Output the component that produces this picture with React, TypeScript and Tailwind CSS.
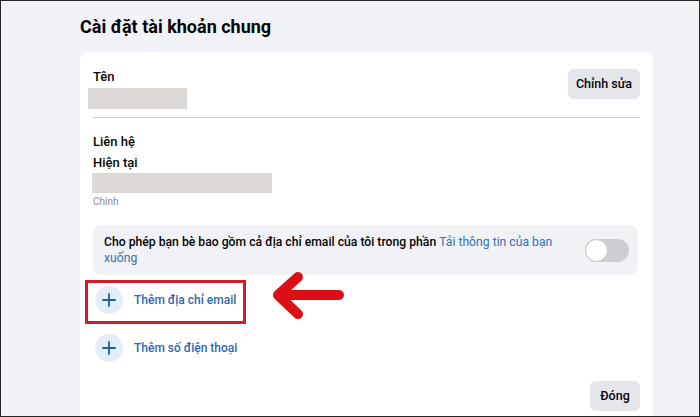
export default function App() {
  return (
    <div className="relative w-[700px] h-[417px] overflow-hidden border border-[#262626] bg-[#f0f2f5] font-['Roboto',sans-serif] text-[#050505]">
      <div className="pl-[79px] pt-[12px]">
        <h1 className="text-[18px] font-bold leading-[28px]">Cài đặt tài khoản chung</h1>

        <div className="mt-[11px] h-[400px] w-[573px] rounded-lg bg-white px-[13px] pt-[17px]">
          <div className="flex justify-between">
            <div>
              <div className="text-[13px] font-medium leading-[16px]">Tên</div>
              <div className="ml-[-5px] mt-[3px] h-[21px] w-[99px] bg-[#ddd9d6]" />
            </div>
            <button className="h-[30px] w-[72px] rounded-md bg-[#e4e6eb] text-[12.5px] font-medium">Chỉnh sửa</button>
          </div>

          <div className="mt-[8px] h-px bg-[#ced0d4]" />

          <div className="mt-[16px] text-[13px] font-medium leading-[16px]">Liên hệ</div>
          <div className="mt-[5px] text-[13px] font-medium leading-[16px]">Hiện tại</div>
          <div className="ml-[-1px] mt-[2px] h-[20px] w-[180px] bg-[#ddd9d6]" />
          <div className="mt-[2px] text-[10px] leading-[14px] text-[#8a8d91]">Chính</div>

          <div className="mt-[16px] flex h-[50px] w-[545px] items-center justify-between rounded-lg bg-[#f0f2f5] pl-[11px] pr-[9px]">
            <p className="w-[455px] text-[12.2px] font-medium leading-[16px]">
              Cho phép bạn bè bao gồm cả địa chỉ email của tôi trong phần{' '}
              <span className="font-normal text-[#3a6fb0]">Tải thông tin của bạn xuống</span>
            </p>
            <div className="flex h-[23px] w-[44px] items-center rounded-full bg-[#ccced2]">
              <div className="h-[23px] w-[23px] rounded-full border border-[#c4c4c4] bg-white" />
            </div>
          </div>

          <div className="ml-[-8px] mt-[5px] flex h-[44px] w-[161px] items-center border-[3px] border-[#d11a2a] pb-[4px] pl-[7px]">
            <PlusCircle />
            <span className="ml-[11px] whitespace-nowrap text-[12px] font-medium text-[#2f69ad]">Thêm địa chỉ email</span>
          </div>

          <div className="mt-[10px] flex items-center pl-[2px]">
            <PlusCircle />
            <span className="ml-[11px] whitespace-nowrap text-[12px] font-medium text-[#2f69ad]">Thêm số điện thoại</span>
          </div>

          <div className="mt-[19px] flex justify-end">
            <button className="h-[30px] w-[50px] rounded-md bg-[#e4e6eb] text-[12.5px] font-medium">Đóng</button>
          </div>
        </div>
      </div>

      {/* annotation arrow */}
      <svg className="absolute left-0 top-0" width="700" height="417" viewBox="0 0 700 417">
        <g fill="none" stroke="#dc0f16" strokeWidth="10" strokeLinecap="round" strokeLinejoin="round">
          <polyline points="297,276 277,294 297,313" />
          <line x1="279" y1="294" x2="338" y2="294" />
        </g>
      </svg>
    </div>
  );
}

function PlusCircle() {
  return (
    <div className="flex h-[28px] w-[28px] items-center justify-center rounded-full bg-[#e4eef8]">
      <svg width="14" height="14" viewBox="0 0 14 14">
        <path d="M7 1v12M1 7h12" stroke="#1d5d9f" strokeWidth="1.8" strokeLinecap="round" />
      </svg>
    </div>
  );
}
